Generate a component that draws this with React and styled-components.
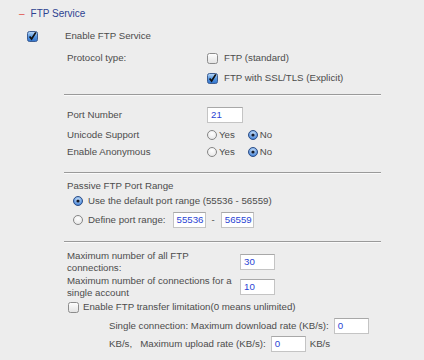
import React from "react";
import styled, { createGlobalStyle } from "styled-components";

const GlobalStyle = createGlobalStyle`
  html, body {
    margin: 0;
    padding: 0;
    background: #ededed;
  }
  body {
    font-family: "Liberation Sans", Arial, sans-serif;
    font-size: 9.7px;
    color: #4c4c4c;
  }
`;

const Checkbox = ({ checked }) => (
  <CheckBox>
    <svg width="11" height="11" viewBox="0 0 11 11">
      <defs>
        <linearGradient id={checked ? "cbOn" : "cbOff"} x1="0" y1="0" x2="0" y2="1">
          {checked ? (
            <>
              <stop offset="0" stopColor="#bcdaf8" />
              <stop offset="0.5" stopColor="#5b9ae2" />
              <stop offset="1" stopColor="#2f72cc" />
            </>
          ) : (
            <>
              <stop offset="0" stopColor="#ffffff" />
              <stop offset="1" stopColor="#e2e2e2" />
            </>
          )}
        </linearGradient>
      </defs>
      <rect
        x="0.5"
        y="0.5"
        width="10"
        height="10"
        rx="2"
        fill={`url(#${checked ? "cbOn" : "cbOff"})`}
        stroke={checked ? "#3d5d92" : "#8c8c8c"}
      />
      {checked && (
        <path d="M2.6 5.4 L4.6 8 L8.8 1.4" fill="none" stroke="#111" strokeWidth="1.7" />
      )}
    </svg>
  </CheckBox>
);

const Radio = ({ checked }) => (
  <RadioBox>
    <svg width="10" height="10" viewBox="0 0 10 10">
      <defs>
        <radialGradient id={checked ? "rdOn" : "rdOff"} cx="0.5" cy="0.35" r="0.7">
          {checked ? (
            <>
              <stop offset="0" stopColor="#cfe6fc" />
              <stop offset="1" stopColor="#2d72d2" />
            </>
          ) : (
            <>
              <stop offset="0" stopColor="#ffffff" />
              <stop offset="1" stopColor="#e4e4e4" />
            </>
          )}
        </radialGradient>
      </defs>
      <circle
        cx="5"
        cy="5"
        r="4.5"
        fill={`url(#${checked ? "rdOn" : "rdOff"})`}
        stroke={checked ? "#2f4f86" : "#858585"}
      />
      {checked && <circle cx="5" cy="5" r="1.6" fill="#141a2a" />}
    </svg>
  </RadioBox>
);

const App = () => {
  return (
    <>
      <GlobalStyle />
      <Page>
        <SectionTitle>
          <Minus>–</Minus>FTP Service
        </SectionTitle>
        <EnableRow>
          <Checkbox checked />
          <EnableLabel>Enable FTP Service</EnableLabel>
        </EnableRow>

        <Body>
          <ProtocolRow>
            <Label>Protocol type:</Label>
            <OptionList>
              <Option>
                <Checkbox />
                <span>FTP (standard)</span>
              </Option>
              <Option>
                <Checkbox checked />
                <span>FTP with SSL/TLS (Explicit)</span>
              </Option>
            </OptionList>
          </ProtocolRow>

          <Divider />

          <FieldRow $mt={12} $h={16}>
            <Label>Port Number</Label>
            <Field $w={36}>21</Field>
          </FieldRow>
          <FieldRow $mt={6} $h={12}>
            <Label>Unicode Support</Label>
            <YesNo>
              <Radio />
              <span>Yes</span>
              <NoGap />
              <Radio checked />
              <span>No</span>
            </YesNo>
          </FieldRow>
          <FieldRow $mt={5} $h={12}>
            <Label>Enable Anonymous</Label>
            <YesNo>
              <Radio />
              <span>Yes</span>
              <NoGap />
              <Radio checked />
              <span>No</span>
            </YesNo>
          </FieldRow>

          <Divider $mt={14} />

          <GroupTitle>Passive FTP Port Range</GroupTitle>
          <RadioRow $mt={3}>
            <Radio checked />
            <span>Use the default port range (55536 - 56559)</span>
          </RadioRow>
          <RadioRow $mt={5}>
            <Radio />
            <span>Define port range:</span>
            <Field $w={33} $ml={2}>55536</Field>
            <Dash>-</Dash>
            <Field $w={33}>56559</Field>
          </RadioRow>

          <Divider $mt={13} />

          <LimitRow $mt={8}>
            <LongLabel>Maximum number of all FTP connections:</LongLabel>
            <Field $w={35}>30</Field>
          </LimitRow>
          <LimitRow $mt={1}>
            <LongLabel>Maximum number of connections for a single account</LongLabel>
            <Field $w={35}>10</Field>
          </LimitRow>

          <TransferRow>
            <Checkbox />
            <span>Enable FTP transfer limitation(0 means unlimited)</span>
          </TransferRow>
          <RateRow $mt={5}>
            <span>Single connection: Maximum download rate (KB/s):</span>
            <Field $w={35} $ml={5}>0</Field>
          </RateRow>
          <RateRow $mt={2}>
            <span>KB/s,&nbsp;&nbsp; Maximum upload rate (KB/s):</span>
            <Field $w={35} $ml={5}>0</Field>
            <Unit>KB/s</Unit>
          </RateRow>
        </Body>
      </Page>
    </>
  );
};

const Page = styled.div`
  padding-top: 8px;
  width: 424px;
  min-height: 360px;
  box-sizing: border-box;
  line-height: 12px;
`;

const SectionTitle = styled.div`
  display: flex;
  align-items: center;
  height: 12px;
  padding-left: 19px;
  color: #2e4391;
  font-size: 10px;
`;

const Minus = styled.span`
  color: #e0504a;
  margin-right: 6px;
`;

const CheckBox = styled.span`
  display: inline-flex;
  width: 11px;
  height: 11px;
  flex: none;
`;

const RadioBox = styled.span`
  display: inline-flex;
  width: 10px;
  height: 10px;
  flex: none;
`;

const EnableRow = styled.div`
  display: flex;
  align-items: center;
  height: 12px;
  margin-top: 10px;
  padding-left: 27px;
`;

const EnableLabel = styled.span`
  margin-left: 27px;
`;

const Body = styled.div`
  margin-left: 64px;
  width: 317px;
`;

const ProtocolRow = styled.div`
  display: grid;
  grid-template-columns: 143px 1fr;
  margin-top: 10px;
`;

const Label = styled.div`
  padding-left: 3px;
`;

const OptionList = styled.div`
  display: flex;
  flex-direction: column;
  gap: 8px;
`;

const Option = styled.div`
  display: flex;
  align-items: center;
  gap: 6px;
  height: 12px;
`;

const Divider = styled.div`
  margin-top: ${({ $mt }) => $mt ?? 10}px;
  height: 1px;
  background: #9a9a9a;
  box-shadow: 0 1px 0 #fafafa;
`;

const FieldRow = styled.div`
  display: grid;
  grid-template-columns: 143px 1fr;
  align-items: center;
  height: ${({ $h }) => $h}px;
  margin-top: ${({ $mt }) => $mt}px;
`;

const Field = styled.div`
  box-sizing: border-box;
  width: ${({ $w }) => $w}px;
  height: 16px;
  margin-left: ${({ $ml }) => $ml ?? 0}px;
  padding-left: 3px;
  background: #fff;
  border: 1px solid #c4c4c4;
  border-top-color: #a8a8a8;
  color: #2a44d4;
  line-height: 14px;
  flex: none;
`;

const YesNo = styled.div`
  display: flex;
  align-items: center;
  gap: 2px;
`;

const NoGap = styled.span`
  width: 9px;
`;

const GroupTitle = styled.div`
  margin-top: 7px;
  padding-left: 3px;
  height: 12px;
`;

const RadioRow = styled.div`
  display: flex;
  align-items: center;
  gap: 5px;
  min-height: 12px;
  margin-top: ${({ $mt }) => $mt}px;
  padding-left: 9px;
`;

const Dash = styled.span`
  margin: 0 1px;
`;

const LimitRow = styled.div`
  display: grid;
  grid-template-columns: 176px 1fr;
  align-items: center;
  margin-top: ${({ $mt }) => $mt}px;
`;

const LongLabel = styled.div`
  padding-left: 3px;
`;

const TransferRow = styled.div`
  display: flex;
  align-items: center;
  gap: 4px;
  height: 12px;
  margin-top: 2px;
  padding-left: 4px;
`;

const RateRow = styled.div`
  display: flex;
  align-items: center;
  height: 16px;
  margin-top: ${({ $mt }) => $mt}px;
  padding-left: 45px;
  white-space: nowrap;
`;

const Unit = styled.span`
  margin-left: 4px;
`;

export default App;
